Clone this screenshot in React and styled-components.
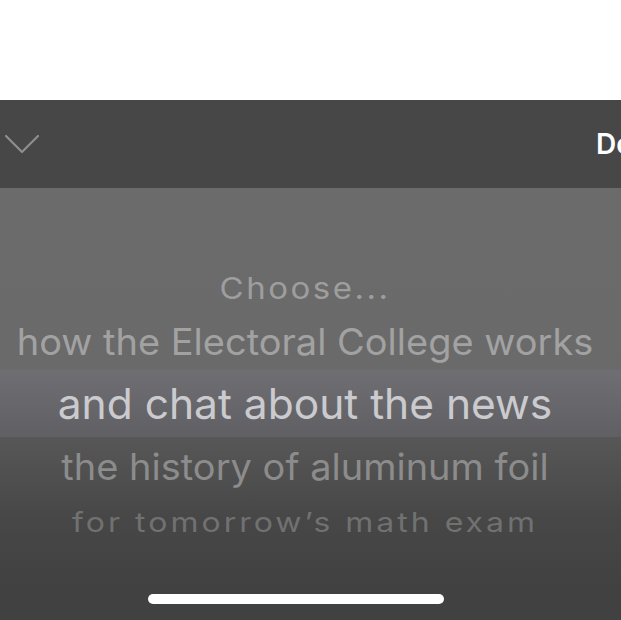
import styled, { createGlobalStyle } from "styled-components"

const GlobalStyle = createGlobalStyle`
  html, body {
    margin: 0;
    padding: 0;
    background: #ffffff;
  }
  body {
    font-family: Inter, "Noto Sans", sans-serif;
    overflow: hidden;
  }
`

const Screen = styled.div`
  width: 621px;
  height: 620px;
  display: flex;
  flex-direction: column;
  background: #ffffff;
  overflow: hidden;
`

const TopSpace = styled.div`
  height: 100px;
  flex-shrink: 0;
`

const Toolbar = styled.div`
  height: 88px;
  flex-shrink: 0;
  background: #474747;
  display: flex;
  align-items: center;
  justify-content: space-between;
  padding-left: 4px;
`

const Chevron = styled.svg`
  width: 36px;
  height: 22px;
  display: block;
`

const DoneButton = styled.span`
  font-size: 28px;
  font-weight: 600;
  color: #ffffff;
  margin-right: -46px;
  white-space: nowrap;
`

const Picker = styled.div`
  flex: 1;
  display: flex;
  flex-direction: column;
  padding-top: 75px;
  background: linear-gradient(
    to bottom,
    #6b6b6b 0px,
    #6a6a6a 182px,
    #575757 249px,
    #474747 330px,
    #414141 400px
  );
`

const Row = styled.div`
  height: ${(p) => p.$h}px;
  display: flex;
  align-items: center;
  justify-content: center;
  padding-right: 11px;
  white-space: nowrap;
  font-size: ${(p) => p.$size}px;
  letter-spacing: ${(p) => p.$spacing}px;
  color: ${(p) => p.$color};
  background: ${(p) => (p.$selected ? "linear-gradient(to bottom, #6f6f73, #606064)" : "transparent")};
`

const Label = styled.span`
  display: inline-block;
  transform: scaleY(${(p) => p.$squash});
`

const HomeArea = styled.div`
  flex: 1;
  display: flex;
  align-items: flex-end;
  justify-content: center;
  padding-bottom: 16px;
`

const HomeIndicator = styled.div`
  width: 296px;
  height: 10px;
  margin-right: 29px;
  border-radius: 5px;
  background: #ffffff;
`

const rows = [
  { text: "Choose...", h: 50, size: 33, spacing: 2.5, squash: 0.9, color: "#9e9e9e" },
  { text: "how the Electoral College works", h: 57, size: 38, spacing: 0, squash: 0.96, color: "#a2a2a2" },
  { text: "and chat about the news", h: 67, size: 42.5, spacing: 0, squash: 1, color: "#cbcbcf", selected: true },
  { text: "the history of aluminum foil", h: 60, size: 38, spacing: 0, squash: 0.95, color: "#8c8c8c" },
  { text: "for tomorrow\u2019s math exam", h: 50, size: 32, spacing: 3, squash: 0.85, color: "#717171" },
]

const App = () => {
  return (
    <>
      <GlobalStyle />
      <Screen>
        <TopSpace />
        <Toolbar>
          <Chevron viewBox="0 0 36 22">
            <path d="M2 3 L18 19 L34 3" fill="none" stroke="#8e8e8e" strokeWidth="2.2" strokeLinecap="round" strokeLinejoin="round" />
          </Chevron>
          <DoneButton>Done</DoneButton>
        </Toolbar>
        <Picker>
          {rows.map((r) => (
            <Row key={r.text} $h={r.h} $size={r.size} $spacing={r.spacing} $color={r.color} $selected={r.selected}>
              <Label $squash={r.squash}>{r.text}</Label>
            </Row>
          ))}
          <HomeArea>
            <HomeIndicator />
          </HomeArea>
        </Picker>
      </Screen>
    </>
  )
}

export default App
